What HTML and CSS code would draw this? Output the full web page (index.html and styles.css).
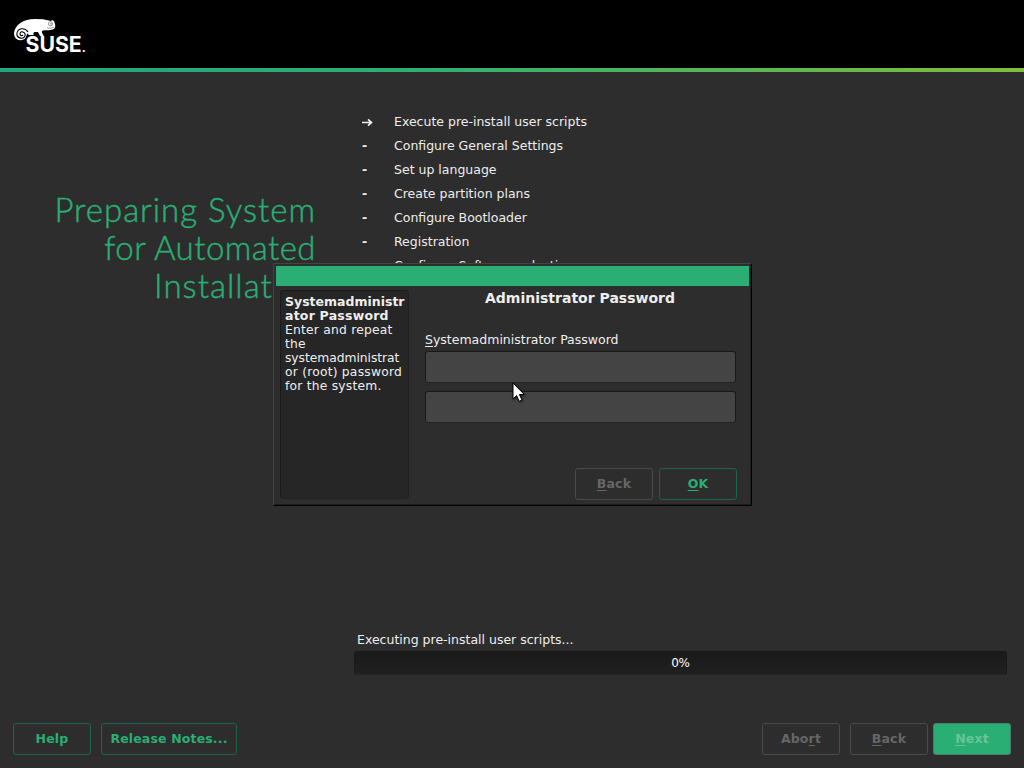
FILE: index.html
```html
<!DOCTYPE html>
<html lang="en">
<head>
<meta charset="utf-8">
<title>Preparing System for Automated Installation</title>
<link rel="stylesheet" href="styles.css">
</head>
<body>
<div class="installer">
  <header class="banner">
    <svg class="logo" viewBox="0 0 90 38" width="90" height="38" aria-label="SUSE">
      <path fill="#fff" d="M0 15C1 7 9 1 21 1L29 1.3L37 3C38 1 41 3 40.5 5C42 7 41 10 40 11C37 12.5 33 12 29 12.5C27 13.5 28 15 30 18L26 18L24 14L20.5 14C19 15 19 16 20 17L14.5 17L14 15.5C12 16 13 19 10.5 21C5 24 0 21 0 15Z"/>
      <path fill="none" stroke="#000" stroke-width="1.1" d="M14 14C11 9 4 10 3 15C2 20 9 22 11 18C12 14 6 12 6 16C6 18 8 18 9 17"/>
      <circle cx="36.5" cy="5.8" r="2.1" fill="#fff" stroke="#000" stroke-opacity=".7" stroke-width=".6"/>
      <circle cx="37" cy="5.8" r=".6" fill="#000"/>
      <path fill="none" stroke="#000" stroke-width=".4" d="M33 9.5C35 11 38 10 40 9"/>
      <text class="logo-text" transform="translate(11.5 34.4) scale(1.17 1)"><tspan textLength="48" lengthAdjust="spacingAndGlyphs">SUSE</tspan></text>
      <text class="logo-dot" x="67.8" y="34.4">.</text>
    </svg>
  </header>
  <main class="content">
    <h1 class="title"><span class="t1">Preparing System</span><span class="t2">for Automated</span><span class="t3">Installat<span class="tail">ion</span></span></h1>
    <section class="progress-panel">
      <ul class="steps">
        <li><span class="mark arrow"><svg width="11" height="9" viewBox="0 0 11 9"><path d="M0 4.5H10M6 1.3L9.5 4.5L6 7.7" fill="none" stroke="#eee" stroke-width="1.7"/></svg></span>Execute pre-install user scripts</li>
        <li><span class="mark">-</span>Configure General Settings</li>
        <li><span class="mark">-</span>Set up language</li>
        <li><span class="mark">-</span>Create partition plans</li>
        <li><span class="mark">-</span>Configure Bootloader</li>
        <li><span class="mark">-</span>Registration</li>
        <li><span class="mark">-</span>Configure Software selections</li>
      </ul>
      <div class="status">Executing pre-install user scripts...</div>
      <div class="bar">0%</div>
    </section>
  </main>
  <footer class="actions">
    <button class="btn">Help</button>
    <button class="btn notes">Release Notes...</button>
    <span class="spacer"></span>
    <button class="btn off abort">Abo<u>r</u>t</button>
    <button class="btn off back"><u>B</u>ack</button>
    <button class="btn next"><u>N</u>ext</button>
  </footer>
  <div class="dialog">
    <div class="dialog-bar"></div>
    <div class="dialog-body">
      <aside class="help"><b>Systemadministr<br><span class="wide">ator Password</span></b><br>Enter and repeat<br>the<br><span class="tight">systemadministrat</span><br>or (root) password<br>for the system.</aside>
      <div class="form">
        <h2 class="form-title">Administrator Password</h2>
        <label class="label"><u>S</u>ystemadministrator Password</label>
        <input class="field" type="password">
        <input class="field" type="password">
        <div class="form-actions">
          <button class="btn off"><u>B</u>ack</button>
          <button class="btn"><u>O</u>K</button>
        </div>
      </div>
    </div>
  </div>
  <svg class="cursor" width="14" height="22" viewBox="0 0 14 22"><path d="M1 1V17L4.6 13.6L7.2 19.3L10 18L7.4 12.5H12.3Z" fill="#fff" stroke="#000" stroke-width="1"/></svg>
</div>
</body>
</html>
```
FILE: styles.css
```css
* { box-sizing: border-box; }
body { margin: 0; background: #2d2d2d; color: #eee; font: 12.5px "DejaVu Sans", sans-serif; }
u { text-decoration: underline; text-decoration-thickness: 1px; text-underline-offset: 2px; }
.installer { position: relative; width: 1024px; height: 768px; overflow: hidden; display: flex; flex-direction: column; }
.banner { height: 72px; flex: none; background: #000; padding: 18px 0 0 14px; border-bottom: 4px solid; border-image: linear-gradient(90deg, #20a780 0%, #2eae70 40%, #80bd3d 100%) 1; }
.logo { display: block; overflow: visible; }
.logo-text { font: bold 21px Inter, sans-serif; fill: #fff; }
.logo-dot { font: bold 12px Inter, sans-serif; fill: #fff; }
.content { flex: 1; display: flex; }
.title { width: 316px; margin: 0; padding-top: 118px; font: 300 33px/38px Lato, sans-serif; color: #2aae74; display: flex; flex-direction: column; align-items: flex-end; flex: none; -webkit-text-stroke: .45px #2aae74; }
.t1 { letter-spacing: .98px; }
.t2 { letter-spacing: .45px; }
.t3 { width: 162px; letter-spacing: 1.05px; white-space: nowrap; }
.tail { letter-spacing: -1px; margin-left: 1px; }
.progress-panel { width: 653px; margin-left: 38px; display: flex; flex-direction: column; }
.steps { list-style: none; margin: 0; padding: 38px 0 0 8px; }
.steps li { height: 24px; line-height: 24px; display: flex; white-space: nowrap; }
.mark { width: 32px; font-weight: bold; flex: none; }
.arrow { display: flex; align-items: center; padding-top: 1px; }
.status { margin-top: 352px; padding-left: 3px; height: 21px; line-height: 19px; }
.bar { height: 24px; line-height: 22px; border: 1px solid #191919; border-bottom-color: #252525; border-radius: 3px; background: linear-gradient(#1a1a1a, #202020); text-align: center; font-size: 12px; letter-spacing: -.2px; color: #fff; }
.actions { height: 45px; flex: none; display: flex; padding: 0 13px; align-items: flex-start; }
.btn { width: 78px; height: 32px; padding: 0 0 1px; border: 1px solid #1b6549; border-radius: 3px; background: #2d2d2d; color: #2aae74; font: bold 12.5px "DejaVu Sans", sans-serif; letter-spacing: .15px; flex: none; }
.notes { width: 136px; margin-left: 10px; }
.spacer { flex: 1; }
.off { border-color: #4a4a4a; color: #666; }
.back { margin: 0 5px 0 10px; }
.next { background: #2aae74; border-color: #477f67; color: #69c59b; }
.dialog { position: absolute; left: 273px; top: 263px; width: 479px; height: 243px; background: #2d2d2d; border: 1px solid #444; border-right-color: #000; border-bottom-color: #000; box-shadow: inset -1px -1px #1f1f1f; padding: 2px; }
.dialog-bar { height: 20px; width: 473px; background: #2aae74; }
.dialog-body { display: flex; padding: 4px 0 0 4px; }
.help { width: 129px; height: 209px; flex: none; padding: 4px; background: #262626; border: 1px solid #1a1a1a; border-right-color: #202020; border-bottom-color: #202020; border-radius: 4px; line-height: 14px; white-space: nowrap; font-size: 12.3px; letter-spacing: .22px; }
.help b { font-size: 12.5px; letter-spacing: 0; }
.help .wide { letter-spacing: .22px; }
.help .tight { letter-spacing: -.04px; }
.form { width: 310px; margin-left: 16px; display: flex; flex-direction: column; }
.form-title { margin: 0; text-align: center; font-size: 14px; line-height: 16px; }
.label { margin-top: 24px; height: 21px; line-height: 19px; }
.field { width: 311px; height: 32px; margin: 0 0 8px; border: 1px solid #191919; border-bottom-color: #222; border-radius: 3px; background: #444; color: #eee; outline: none; }
.form-actions { width: 312px; display: flex; justify-content: flex-end; gap: 6px; margin-top: 37px; }
.cursor { position: absolute; left: 512px; top: 382px; filter: drop-shadow(1px 1px 1px #0008); }
```
